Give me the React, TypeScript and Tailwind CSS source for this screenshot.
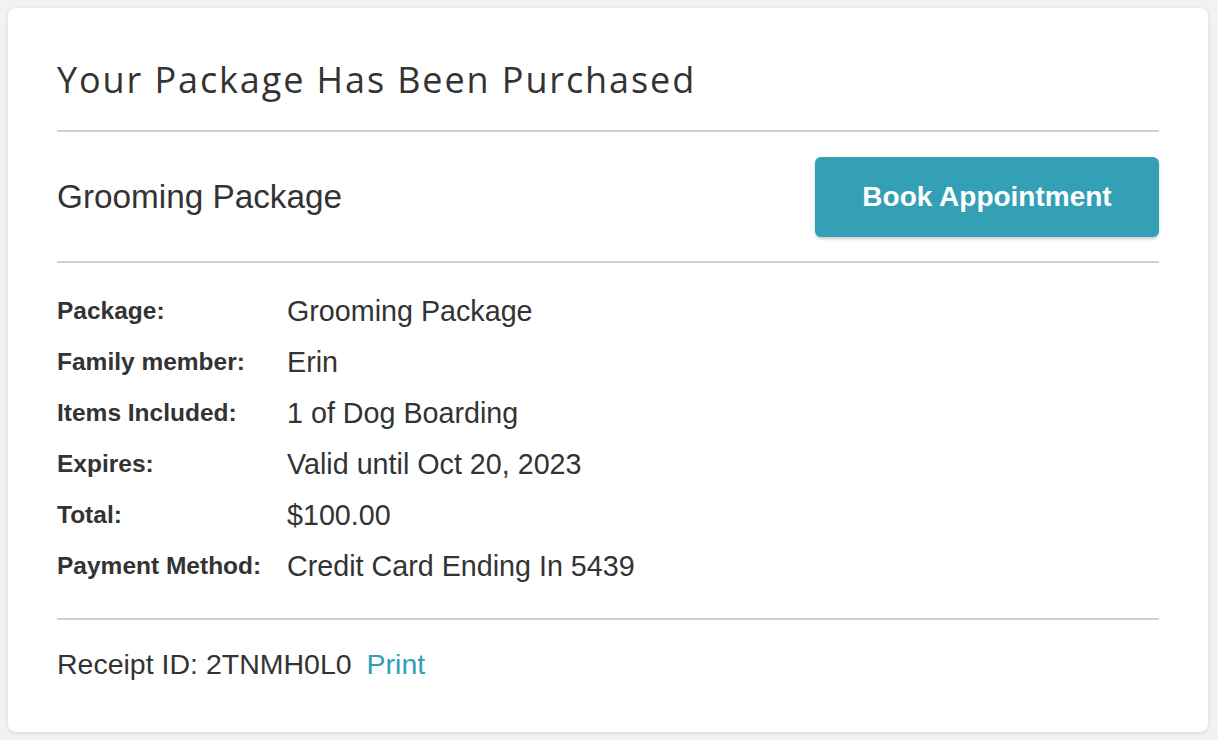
const details = [
  { label: 'Package:', value: 'Grooming Package' },
  { label: 'Family member:', value: 'Erin' },
  { label: 'Items Included:', value: '1 of Dog Boarding' },
  { label: 'Expires:', value: 'Valid until Oct 20, 2023' },
  { label: 'Total:', value: '$100.00' },
  { label: 'Payment Method:', value: 'Credit Card Ending In 5439' },
]

function Divider() {
  return <div className="h-[2px] bg-[#cfcfcf]" />
}

export default function App() {
  return (
    <div className="min-h-[740px] bg-[#f2f2f2] pb-2 pl-2 pr-[10px] pt-2 font-['Liberation_Sans',Arial,sans-serif] text-[#333333]">
      <div className="rounded-lg bg-white px-[49px] pb-[52px] pt-[50px] shadow-[0_1px_4px_rgba(0,0,0,0.12)]">
        <h1 className="mb-[28px] font-['Open_Sans',sans-serif] text-[36px] leading-[44px] font-medium tracking-[1.9px]">
          Your Package Has Been Purchased
        </h1>
        <Divider />

        <div className="flex items-center justify-between pb-[24px] pt-[25px]">
          <h2 className="text-[33.3px] leading-[40px]">Grooming Package</h2>
          <button className="h-[80px] w-[344px] rounded-md bg-[#33a0b6] text-[28px] font-bold text-white shadow-[0_2px_3px_rgba(0,0,0,0.2)]">
            Book Appointment
          </button>
        </div>
        <Divider />

        <div className="pb-[26px] pt-[23px]">
          {details.map((row) => (
            <div key={row.label} className="flex h-[51px] items-center">
              <span className="w-[230px] text-[24.5px] font-bold">{row.label}</span>
              <span className="text-[28.7px]">{row.value}</span>
            </div>
          ))}
        </div>
        <Divider />

        <div className="flex items-center gap-[15px] pt-[28px] text-[28.5px] leading-[32px]">
          <span>Receipt ID: 2TNMH0L0</span>
          <a href="#" className="text-[#2e9fb6]">Print</a>
        </div>
      </div>
    </div>
  )
}
